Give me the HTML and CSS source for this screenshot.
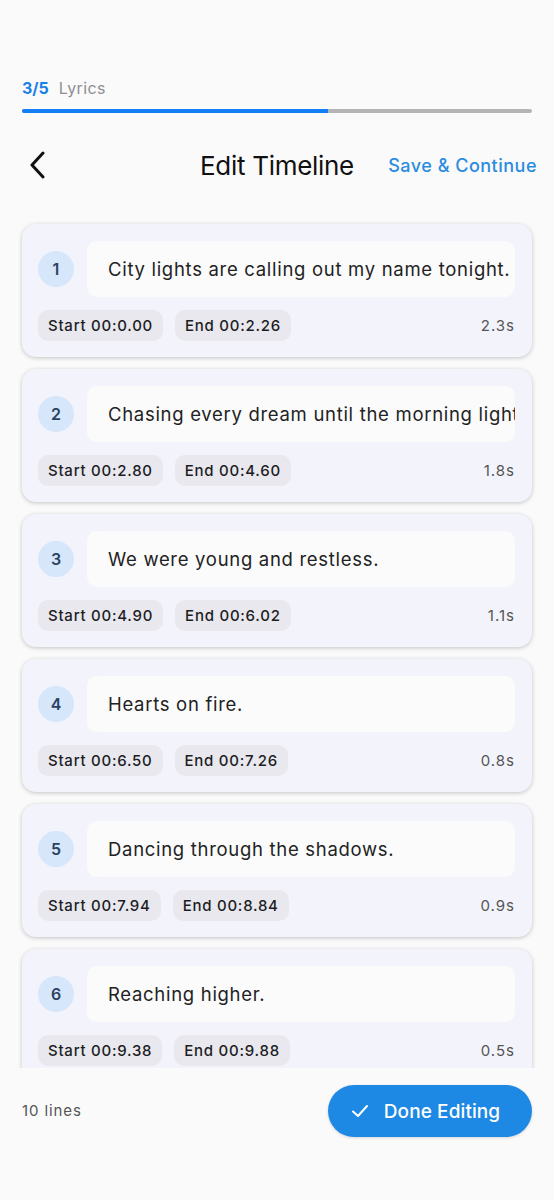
FILE: index.html
```html
<!DOCTYPE html>
<html lang="en">
<head>
    <meta charset="UTF-8">
    <meta name="viewport" content="width=device-width, initial-scale=1.0">
    <title>Edit Timeline</title>
    <link rel="stylesheet" href="styles.css">
</head>
<body>
    <div class="app">
        <div class="progress">
            <div class="progress-label"><span class="step">3/5</span><span class="step-name">Lyrics</span></div>
            <div class="progress-track"><div class="progress-fill" style="width: 60%"></div></div>
        </div>

        <header class="topbar">
            <button class="back-btn" aria-label="Back">
                <svg width="18" height="28" viewBox="0 0 18 28"><path d="M15 2 L4 14 L15 26" fill="none" stroke="#111" stroke-width="3" stroke-linecap="round" stroke-linejoin="round"/></svg>
            </button>
            <h1 class="title">Edit Timeline</h1>
            <button class="save-btn">Save &amp; Continue</button>
        </header>

        <main class="lines">
            <div class="line-card">
                <div class="line-top">
                    <div class="line-num">1</div>
                    <div class="line-text">City lights are calling out my name tonight.</div>
                </div>
                <div class="line-meta">
                    <span class="chip">Start 00:0.00</span>
                    <span class="chip">End 00:2.26</span>
                    <span class="duration">2.3s</span>
                </div>
            </div>
            <div class="line-card">
                <div class="line-top">
                    <div class="line-num">2</div>
                    <div class="line-text">Chasing every dream until the morning light.</div>
                </div>
                <div class="line-meta">
                    <span class="chip">Start 00:2.80</span>
                    <span class="chip">End 00:4.60</span>
                    <span class="duration">1.8s</span>
                </div>
            </div>
            <div class="line-card">
                <div class="line-top">
                    <div class="line-num">3</div>
                    <div class="line-text">We were young and restless.</div>
                </div>
                <div class="line-meta">
                    <span class="chip">Start 00:4.90</span>
                    <span class="chip">End 00:6.02</span>
                    <span class="duration">1.1s</span>
                </div>
            </div>
            <div class="line-card">
                <div class="line-top">
                    <div class="line-num">4</div>
                    <div class="line-text">Hearts on fire.</div>
                </div>
                <div class="line-meta">
                    <span class="chip">Start 00:6.50</span>
                    <span class="chip">End 00:7.26</span>
                    <span class="duration">0.8s</span>
                </div>
            </div>
            <div class="line-card">
                <div class="line-top">
                    <div class="line-num">5</div>
                    <div class="line-text">Dancing through the shadows.</div>
                </div>
                <div class="line-meta">
                    <span class="chip">Start 00:7.94</span>
                    <span class="chip">End 00:8.84</span>
                    <span class="duration">0.9s</span>
                </div>
            </div>
            <div class="line-card">
                <div class="line-top">
                    <div class="line-num">6</div>
                    <div class="line-text">Reaching higher.</div>
                </div>
                <div class="line-meta">
                    <span class="chip">Start 00:9.38</span>
                    <span class="chip">End 00:9.88</span>
                    <span class="duration">0.5s</span>
                </div>
            </div>
        </main>

        <footer class="bottombar">
            <span class="count">10 lines</span>
            <button class="done-btn">
                <svg width="20" height="20" viewBox="0 0 20 20"><path d="M3 10.5 L8 15 L17 5" fill="none" stroke="#fff" stroke-width="2" stroke-linecap="round" stroke-linejoin="round"/></svg>
                Done Editing
            </button>
        </footer>
    </div>
</body>
</html>
```

FILE: styles.css
```css
* {
    box-sizing: border-box;
    margin: 0;
    padding: 0;
}

body {
    font-family: Inter, "Noto Sans", sans-serif;
    background-color: #fafafa;
    color: #1d1d1f;
}

.app {
    height: 1200px;
    display: flex;
    flex-direction: column;
}

button {
    border: none;
    background: none;
    font-family: inherit;
    cursor: pointer;
}

.progress {
    padding: 77px 22px 0;
}

.progress-label {
    font-size: 16px;
    line-height: 22px;
    display: flex;
    gap: 10px;
}

.step {
    color: #1a7fe8;
    font-weight: 700;
}

.step-name {
    color: #8e8e93;
    letter-spacing: 0.4px;
}

.progress-track {
    margin-top: 10px;
    height: 4px;
    border-radius: 2px;
    background-color: #b5b5b8;
    overflow: hidden;
}

.progress-fill {
    height: 100%;
    background-color: #147ef5;
}

.topbar {
    display: grid;
    grid-template-columns: 1fr auto 1fr;
    align-items: center;
    padding: 0 17px;
    height: 104px;
}

.back-btn {
    display: flex;
    width: 24px;
    padding: 0;
    margin-left: 11px;
}

.title {
    font-size: 26px;
    font-weight: 400;
    letter-spacing: -0.3px;
    color: #111;
}

.save-btn {
    justify-self: end;
    color: #2b8ce0;
    font-size: 18px;
    font-weight: 500;
    letter-spacing: 0.5px;
}

.lines {
    flex: 1;
    overflow: hidden;
    padding: 7px 22px 0;
    display: flex;
    flex-direction: column;
    gap: 12px;
}

.line-card {
    flex-shrink: 0;
    background-color: #f3f4fb;
    border-radius: 14px;
    box-shadow: 0 1px 4px rgba(0, 0, 0, 0.22);
    padding: 17px 17px 16px 16px;
}

.line-top {
    display: flex;
    align-items: center;
    gap: 13px;
}

.line-num {
    width: 36px;
    height: 36px;
    flex-shrink: 0;
    border-radius: 50%;
    background-color: #d6e6fb;
    color: #2a4262;
    font-size: 16px;
    font-weight: 600;
    display: flex;
    align-items: center;
    justify-content: center;
}

.line-text {
    flex: 1;
    min-width: 0;
    height: 56px;
    background-color: #fbfbfc;
    border-radius: 10px;
    padding: 0 0 0 21px;
    display: flex;
    align-items: center;
    font-size: 18.5px;
    letter-spacing: 0.7px;
    color: #222;
    white-space: nowrap;
    overflow: hidden;
}

.line-meta {
    margin-top: 13px;
    display: flex;
    align-items: center;
    gap: 12px;
}

.chip {
    height: 31px;
    padding: 0 10px;
    border-radius: 10px;
    background-color: #e8e8ee;
    font-size: 15px;
    font-weight: 500;
    letter-spacing: 0.75px;
    color: #1d1d1f;
    display: flex;
    align-items: center;
}

.duration {
    margin-left: auto;
    font-size: 15px;
    letter-spacing: 1px;
    color: #555;
}

.bottombar {
    height: 132px;
    display: flex;
    align-items: flex-start;
    justify-content: space-between;
    padding: 17px 22px 0;
}

.count {
    margin-top: 16px;
    font-size: 15px;
    letter-spacing: 0.9px;
    color: #555;
}

.done-btn {
    width: 204px;
    height: 52px;
    border-radius: 26px;
    background-color: #1e88e5;
    color: #fff;
    font-size: 19px;
    font-weight: 500;
    letter-spacing: 0.1px;
    display: flex;
    align-items: center;
    justify-content: center;
    gap: 14px;
    padding-right: 10px;
    box-shadow: 0 1px 3px rgba(0, 0, 0, 0.15);
}
```
